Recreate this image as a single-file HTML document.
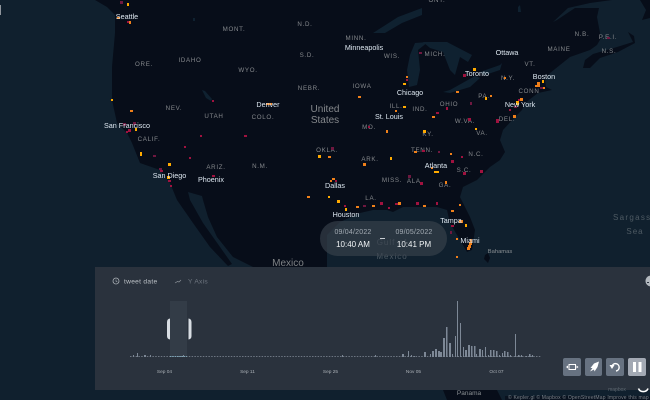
<!DOCTYPE html>
<html><head><meta charset="utf-8"><style>
html,body{margin:0;padding:0;background:#10202e;width:650px;height:400px;overflow:hidden}
svg{position:absolute;left:0;top:0;display:block;filter:blur(.35px)}
text{font-family:"Liberation Sans",sans-serif}
.s{font-size:6.2px;fill:#85888c;letter-spacing:.7px;text-anchor:middle}
.c{font-size:7.2px;fill:#dde7f0;text-anchor:middle}
.l{fill:#070d19}
.w{fill:#0f2130}
.a{font-size:4.8px;fill:#aab0b6;text-anchor:middle}
</style></head><body>
<svg width="650" height="400" viewBox="0 0 650 400" xmlns="http://www.w3.org/2000/svg">
<rect width="650" height="400" fill="#10202e"/>
<path class="l" d="M95 0L107 7L115 15L115 33L112 67L112 100L117 123L127 133L132 143L140 163L160 170L170 183L177 200L193 223L210 247L228 266L232 264L220 247L203 223L190 200L188 192L202 196L203 200L208 217L217 237L233 257L253 267L253 275L327 275L327 235L340 222L360 213L373 210L387 210L393 212L403 207L423 207L437 207L447 210L450 223L460 240L467 252L472 250L475 230L470 217L460 197L463 187L477 180L490 167L500 160L505 152L500 140L503 130L515 117L522 110L525 103L538 93L552 90L546 87L545 80L550 73L570 57L590 50L597 45L601 38L600 33L597 17L599 8L575 8L557 20L553 22L568 8L590 3L612 0Z"/>
<path class="l" d="M583 68L585 60L593 54L617 47L633 42L628 32L634 36L635 43L618 52L600 58L590 68Z"/>
<path class="l" d="M640 0L650 0L650 18L642 20L646 10Z"/>
<path class="l" d="M485 255L488 253L490 258L488 263L484 259Z"/>
<path class="l" d="M443 390L497 390L502 400L447 400Z"/>
<path class="l" d="M505 396L650 396L650 400L505 400Z" opacity=".7"/>
<path class="w" d="M373 33L398 17L422 8L422 15L402 23L385 33Z"/>
<path class="w" d="M415 43L428 42L418 50L420 70L417 85L409 87L407 70L410 55Z"/>
<path class="w" d="M423 42L447 42L472 55L468 62L460 57L455 75L450 70L443 52L430 48Z"/>
<path class="w" d="M443 92L450 90L475 76L480 78L470 87L450 93Z"/>
<path class="w" d="M480 72L500 65L502 63L500 70L485 75Z"/>
<path class="w" d="M202 90L205 91L212 99L211 101L206 98Z"/>
<path class="w" d="M518 7L520 5L521 12L518 12Z M193 18L195 18L195 21L193 21Z"/>

<g class="s">
<text x="234" y="31">MONT.</text><text x="190" y="62">IDAHO</text><text x="144" y="66">ORE.</text><text x="248" y="72">WYO.</text>
<text x="305" y="26">N.D.</text><text x="307" y="57">S.D.</text><text x="309" y="90">NEBR.</text><text x="174" y="110">NEV.</text>
<text x="214" y="118">UTAH</text><text x="263" y="119">COLO.</text><text x="149" y="141">CALIF.</text><text x="216" y="169">ARIZ.</text>
<text x="260" y="168">N.M.</text><text x="356" y="40">MINN.</text><text x="392" y="58">WIS.</text><text x="362" y="88">IOWA</text>
<text x="396" y="108">ILL.</text><text x="420" y="111">IND.</text><text x="449" y="106">OHIO</text><text x="435" y="56">MICH.</text>
<text x="369" y="129">MO.</text><text x="428" y="136">KY.</text><text x="465" y="123">W.VA.</text><text x="482" y="135">VA.</text>
<text x="484" y="98">PA.</text><text x="508" y="80">N.Y.</text><text x="530" y="66">VT.</text><text x="559" y="51">MAINE</text>
<text x="582" y="36">N.B.</text><text x="608" y="39">P.E.I.</text><text x="609" y="53">N.S.</text><text x="529" y="93">CONN</text>
<text x="507" y="121">DEL.</text><text x="422" y="152">TENN.</text><text x="476" y="156">N.C.</text><text x="464" y="172">S.C.</text>
<text x="445" y="187">GA.</text><text x="415" y="183">ALA.</text><text x="392" y="182">MISS.</text><text x="370" y="161">ARK.</text>
<text x="371" y="200">LA.</text><text x="327" y="152">OKLA.</text><text x="437" y="2">ONT.</text>
</g>
<text x="325" y="112" text-anchor="middle" font-size="10" fill="#85888c">United</text>
<text x="325" y="123" text-anchor="middle" font-size="10" fill="#85888c">States</text>
<text x="288" y="266" text-anchor="middle" font-size="10" fill="#7e8285">Mexico</text>
<text x="613" y="220" font-size="8" letter-spacing="1.3" fill="#4e5a63">Sargasso</text>
<text x="635" y="234" text-anchor="middle" font-size="8" letter-spacing="1" fill="#4e5a63">Sea</text>
<text x="392" y="245" text-anchor="middle" font-size="8" letter-spacing="1" fill="#4e5a63">Gulf of</text>
<text x="392" y="259" text-anchor="middle" font-size="8" letter-spacing="1" fill="#4e5a63">Mexico</text>
<text x="500" y="253" text-anchor="middle" font-size="5.8" fill="#8a8f93">Bahamas</text>
<text x="469" y="395" text-anchor="middle" font-size="6.5" fill="#8a8f93">Panama</text>

<g shape-rendering="crispEdges">
<g fill="#a0123f">
<rect x="127" y="21" width="2" height="2"/><rect x="212" y="100" width="2" height="2"/><rect x="128" y="129" width="3" height="3"/><rect x="126" y="131" width="2" height="2"/>
<rect x="200" y="135" width="2" height="2"/><rect x="244" y="135" width="3" height="2"/><rect x="184" y="146" width="2" height="2"/><rect x="189" y="157" width="2" height="2"/>
<rect x="160" y="170" width="3" height="2"/><rect x="168" y="180" width="3" height="2"/><rect x="170" y="185" width="2" height="2"/><rect x="212" y="175" width="3" height="2"/>
<rect x="406" y="79" width="2" height="2"/><rect x="463" y="74" width="3" height="3"/><rect x="446" y="107" width="2" height="3"/><rect x="436" y="112" width="3" height="2"/>
<rect x="368" y="126" width="2" height="2"/><rect x="468" y="118" width="3" height="3"/><rect x="496" y="119" width="3" height="4"/><rect x="509" y="109" width="2" height="2"/>
<rect x="518" y="99" width="2" height="2"/><rect x="422" y="150" width="3" height="2"/><rect x="461" y="156" width="2" height="2"/><rect x="451" y="160" width="3" height="3"/>
<rect x="463" y="172" width="3" height="3"/><rect x="480" y="170" width="3" height="3"/><rect x="420" y="182" width="3" height="3"/><rect x="335" y="180" width="2" height="2"/>
<rect x="344" y="205" width="2" height="2"/><rect x="380" y="202" width="3" height="3"/><rect x="388" y="207" width="2" height="2"/><rect x="395" y="203" width="3" height="2"/>
<rect x="416" y="202" width="3" height="3"/><rect x="436" y="202" width="2" height="3"/><rect x="451" y="225" width="3" height="2"/>
</g>
<g fill="#6e1840">
<rect x="120" y="1" width="3" height="3"/><rect x="123" y="123" width="3" height="3"/><rect x="133" y="122" width="3" height="3"/><rect x="153" y="155" width="3" height="2"/>
<rect x="159" y="168" width="3" height="2"/><rect x="419" y="52" width="3" height="2"/><rect x="470" y="102" width="2" height="3"/><rect x="514" y="106" width="3" height="2"/>
<rect x="540" y="87" width="3" height="2"/><rect x="607" y="37" width="3" height="2"/><rect x="331" y="147" width="3" height="3"/><rect x="438" y="151" width="2" height="2"/>
<rect x="408" y="175" width="3" height="3"/><rect x="363" y="205" width="3" height="2"/><rect x="450" y="231" width="2" height="3"/>
</g>
<g fill="#f0801a">
<rect x="117" y="17" width="3" height="2"/><rect x="129" y="21" width="2" height="3"/><rect x="130" y="110" width="3" height="2"/><rect x="266" y="103" width="6" height="2"/>
<rect x="307" y="196" width="3" height="2"/><rect x="406" y="76" width="2" height="2"/><rect x="456" y="91" width="3" height="2"/><rect x="504" y="77" width="2" height="2"/>
<rect x="537" y="82" width="3" height="5"/><rect x="535" y="85" width="2" height="2"/><rect x="543" y="87" width="2" height="2"/><rect x="520" y="98" width="3" height="3"/>
<rect x="358" y="96" width="3" height="2"/><rect x="490" y="95" width="2" height="2"/><rect x="432" y="116" width="3" height="2"/><rect x="395" y="110" width="2" height="2"/>
<rect x="386" y="130" width="2" height="3"/><rect x="513" y="115" width="3" height="3"/><rect x="414" y="151" width="3" height="2"/><rect x="450" y="153" width="2" height="2"/>
<rect x="431" y="167" width="2" height="2"/><rect x="445" y="181" width="2" height="3"/><rect x="363" y="163" width="3" height="3"/><rect x="328" y="156" width="3" height="2"/>
<rect x="332" y="178" width="3" height="2"/><rect x="330" y="180" width="2" height="2"/><rect x="356" y="206" width="3" height="2"/><rect x="372" y="205" width="3" height="2"/>
<rect x="398" y="202" width="3" height="3"/><rect x="423" y="205" width="3" height="2"/><rect x="459" y="204" width="2" height="2"/><rect x="451" y="210" width="3" height="2"/>
<rect x="459" y="220" width="4" height="3"/><rect x="456" y="238" width="2" height="2"/><rect x="456" y="256" width="2" height="2"/>
<rect x="470" y="239" width="2" height="3"/><rect x="469" y="242" width="3" height="3"/><rect x="468" y="245" width="3" height="3"/><rect x="467" y="247" width="3" height="3"/>
</g>
<g fill="#ffaa00">
<rect x="127" y="3" width="2" height="3"/><rect x="111" y="99" width="2" height="2"/><rect x="135" y="128" width="2" height="3"/><rect x="140" y="152" width="2" height="4"/>
<rect x="168" y="163" width="3" height="3"/><rect x="167" y="176" width="3" height="3"/><rect x="318" y="155" width="3" height="3"/><rect x="403" y="83" width="3" height="2"/>
<rect x="473" y="68" width="3" height="3"/><rect x="403" y="106" width="3" height="2"/><rect x="485" y="97" width="2" height="3"/><rect x="423" y="130" width="3" height="3"/>
<rect x="475" y="128" width="2" height="2"/><rect x="516" y="101" width="3" height="4"/><rect x="542" y="80" width="2" height="3"/><rect x="390" y="157" width="2" height="3"/>
<rect x="434" y="171" width="5" height="2"/><rect x="328" y="196" width="2" height="2"/><rect x="337" y="200" width="3" height="3"/><rect x="345" y="208" width="2" height="3"/>
<rect x="465" y="224" width="2" height="3"/>
</g>
</g>

<g class="c">
<text x="127" y="19">Seattle</text><text x="127" y="128">San Francisco</text><text x="169.5" y="178">San Diego</text><text x="211" y="182">Phoenix</text>
<text x="268" y="107">Denver</text><text x="364" y="50">Minneapolis</text><text x="410" y="95">Chicago</text><text x="389" y="119">St. Louis</text>
<text x="335" y="188">Dallas</text><text x="436" y="168">Atlanta</text><text x="477" y="76">Toronto</text><text x="507" y="55">Ottawa</text>
<text x="544" y="79">Boston</text><text x="520" y="107">New York</text><text x="346" y="217">Houston</text><text x="451" y="223">Tampa</text><text x="470" y="243">Miami</text>
</g>

<rect x="320" y="221" width="127" height="35" rx="17.5" fill="#38424c" fill-opacity=".66"/>
<text x="353" y="234" text-anchor="middle" font-size="7" letter-spacing=".2" fill="#a3abb3">09/04/2022</text>
<text x="414" y="234" text-anchor="middle" font-size="7" letter-spacing=".2" fill="#a3abb3">09/05/2022</text>
<text x="353" y="247" text-anchor="middle" font-size="8" fill="#f0f3f5">10:40 AM</text>
<text x="414" y="247" text-anchor="middle" font-size="8" fill="#f0f3f5">10:41 PM</text>
<rect x="380" y="238" width="5" height="1" fill="#c8cdd2"/>

<rect x="95" y="267" width="555" height="123" fill="#2a323d"/>
<circle cx="116" cy="281" r="3" fill="none" stroke="#aab0b6" stroke-width=".8"/>
<path d="M116 279.5V281.3L117.3 282" fill="none" stroke="#aab0b6" stroke-width=".6"/>
<text x="124" y="283.5" font-size="6.6" letter-spacing=".3" fill="#bfc4c9">tweet date</text>
<path d="M175 283L177.5 281.5L179 282L181 280" fill="none" stroke="#8f959c" stroke-width=".7"/>
<text x="188" y="283.5" font-size="6.6" letter-spacing=".3" fill="#6f7680">Y Axis</text>

<rect x="170" y="301" width="17" height="56" fill="#333c47"/>
<path d="M170 318.500Q167 319 167 322V336Q167 339 170 339.500Z" fill="#d8dde3"/>
<path d="M188.500 318.500Q191.500 319 191.500 322V336Q191.500 339 188.500 339.500Z" fill="#d8dde3"/>

<path d="M130 356.500H541" stroke="#6d7682" stroke-width="1" stroke-dasharray="1.500 1.300" fill="none"/>
<path d="M170 356.500H187" stroke="#7fa6b8" stroke-width="1" stroke-dasharray="1.500 .8" fill="none"/>
<g fill="#7d8896" shape-rendering="crispEdges">
<rect x="137" y="353" width="1" height="4"/><rect x="133" y="355" width="1" height="2"/><rect x="144" y="355" width="2" height="2"/><rect x="150" y="355" width="1" height="2"/><rect x="183" y="355" width="1" height="2"/>
<rect x="342" y="355" width="1" height="2"/><rect x="375" y="355" width="1" height="2"/><rect x="402" y="354" width="2" height="3"/><rect x="408" y="351" width="1" height="6"/><rect x="411" y="355" width="1" height="2"/><rect x="414" y="356" width="1" height="1"/>
<rect x="424" y="352" width="2" height="5"/><rect x="430" y="354" width="1" height="3"/><rect x="432" y="351" width="2" height="6"/><rect x="435" y="349" width="2" height="8"/><rect x="438" y="351" width="2" height="6"/><rect x="440" y="352" width="2" height="5"/>
<rect x="443" y="338" width="2" height="19"/><rect x="446" y="327" width="1.500" height="30"/><rect x="449" y="343" width="2" height="14"/><rect x="452" y="354" width="1" height="3"/><rect x="455" y="336" width="1" height="21"/>
<rect x="457" y="301" width="1" height="56"/><rect x="460" y="323" width="1" height="34"/><rect x="463" y="347" width="1" height="10"/><rect x="465" y="350" width="2" height="7"/><rect x="468" y="345" width="2" height="12"/>
<rect x="471" y="346" width="1.500" height="11"/><rect x="474" y="346" width="1.500" height="11"/><rect x="476" y="354" width="1" height="3"/><rect x="479" y="349" width="2" height="8"/><rect x="482" y="350" width="1" height="7"/>
<rect x="485" y="347" width="1" height="10"/><rect x="488" y="355" width="1" height="2"/><rect x="490" y="350" width="1.500" height="7"/><rect x="493" y="350" width="1.500" height="7"/><rect x="496" y="351" width="1.500" height="6"/>
<rect x="499" y="355" width="1" height="2"/><rect x="502" y="353" width="1" height="4"/><rect x="504" y="351" width="1.500" height="6"/><rect x="507" y="352" width="1.500" height="5"/><rect x="510" y="355" width="1" height="2"/>
<rect x="515" y="334" width="1" height="23"/><rect x="518" y="355" width="1.500" height="2"/><rect x="521" y="355" width="1" height="2"/><rect x="526" y="356" width="1" height="1"/><rect x="529" y="354" width="1.500" height="3"/><rect x="532" y="355" width="1" height="2"/>
</g>
<g class="a">
<text x="164.500" y="373">Sep 04</text><text x="247.500" y="373">Sep 11</text><text x="330.500" y="373">Sep 25</text><text x="413.500" y="373">Nov 05</text><text x="496.500" y="373">Oct 07</text>
</g>

<rect x="563" y="358" width="18" height="18" rx="2" fill="#677281"/>
<rect x="585" y="358" width="17" height="18" rx="2" fill="#677281"/>
<rect x="606" y="358" width="18" height="18" rx="2" fill="#677281"/>
<rect x="628" y="358" width="18" height="18" rx="2" fill="#a3a9b4"/>
<rect x="569" y="364.500" width="6.500" height="5" fill="none" stroke="#fff" stroke-width="1"/>
<path d="M568 365.500L566 367L568 368.500Z M576.500 365.500L578.500 367L576.500 368.500Z" fill="#fff"/>
<path d="M599 361.500L594 363.500L590.500 368L592.500 368L590 371.500L594 369.500L594.500 371.500L597.500 367Z" fill="#fff"/>
<path d="M612 366A3.700 3.700 0 1 1 616 371" fill="none" stroke="#fff" stroke-width="1.400"/>
<path d="M609.500 365L614.500 365L612 369Z" fill="#fff"/>
<rect x="633" y="362" width="3" height="10" fill="#fff"/><rect x="638.500" y="362" width="3" height="10" fill="#fff"/>

<circle cx="651" cy="281" r="5.500" fill="#b3b9bf"/>
<rect x="647" y="282" width="2" height="1" fill="#2a323d"/>
<rect x="0" y="5" width="1" height="10" fill="#8f959c"/>
<text x="617" y="391" text-anchor="middle" font-size="5" fill="#5d6770">mapbox</text>
<path d="M638.500 388.500A5 4.500 0 0 0 648 388.500" fill="none" stroke="#fff" stroke-width="1.600"/>
<text x="508" y="399" font-size="5" letter-spacing=".2" fill="#7c848b">© Kepler.gl © Mapbox © OpenStreetMap Improve this map</text>
</svg>
</body></html>
